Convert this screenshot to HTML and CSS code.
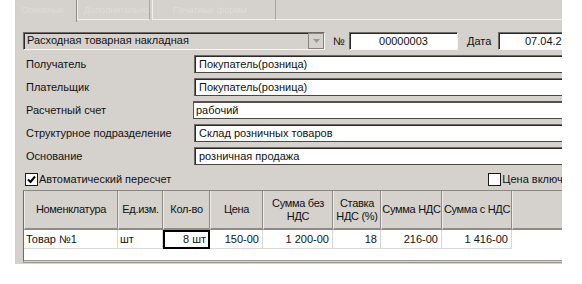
FILE: index.html
```html
<!DOCTYPE html>
<html lang="ru">
<head>
<meta charset="utf-8">
<link rel="stylesheet" href="styles.css">
</head>
<body>
<div class="panel">
  <div class="tabs">
    <div class="tab active">Основные</div>
    <div class="tab t2">Дополнительно</div>
    <div class="tab t3">Печатные формы</div>
    <div class="tab-rest"></div>
  </div>
  <div class="content">
    <div class="toprow">
      <div class="combo">
        <span class="combo-text">Расходная товарная накладная</span>
        <span class="combo-btn"><svg width="7" height="4" viewBox="0 0 7 4"><path d="M0 0h7L3.5 4z" fill="#9a9792"/></svg></span>
      </div>
      <span class="lbl-no">№</span>
      <div class="box numbox">00000003</div>
      <span class="lbl-date">Дата</span>
      <div class="box datebox">07.04.2010</div>
    </div>
    <div class="frow"><span class="flabel">Получатель</span><div class="field">Покупатель(розница)</div></div>
    <div class="frow"><span class="flabel">Плательщик</span><div class="field">Покупатель(розница)</div></div>
    <div class="frow"><span class="flabel">Расчетный счет</span><div class="field flat">рабочий</div></div>
    <div class="frow"><span class="flabel">Структурное подразделение</span><div class="field">Склад розничных товаров</div></div>
    <div class="frow"><span class="flabel">Основание</span><div class="field">розничная продажа</div></div>
    <div class="checks">
      <label class="chk"><span class="cb checked"><svg width="9" height="9" viewBox="0 0 9 9"><path d="M1 4.5l2.5 2.5L8 1.5" stroke="#000" stroke-width="2" fill="none"/></svg></span>Автоматический пересчет</label>
      <label class="chk chk2"><span class="cb"></span>Цена включ</label>
    </div>
    <div class="grid">
      <div class="hc">Номенклатура</div>
      <div class="hc">Ед.изм.</div>
      <div class="hc">Кол-во</div>
      <div class="hc">Цена</div>
      <div class="hc">Сумма без<br>НДС</div>
      <div class="hc">Ставка<br>НДС (%)</div>
      <div class="hc">Сумма НДС</div>
      <div class="hc">Сумма с НДС</div>
      <div class="hc empty"></div>
      <div class="dc left">Товар №1</div>
      <div class="dc left">шт</div>
      <div class="dc sel">8 шт</div>
      <div class="dc">150-00</div>
      <div class="dc">1 200-00</div>
      <div class="dc">18</div>
      <div class="dc">216-00</div>
      <div class="dc">1 416-00</div>
      <div class="dc blank"></div>
      <div class="gfill"></div>
    </div>
  </div>
</div>
</body>
</html>
```
FILE: styles.css
```css
* { box-sizing: border-box; }
html, body { margin: 0; padding: 0; background: #fff; }
body {
  font-family: "Liberation Sans", Arial, sans-serif;
  font-size: 11px;
  color: #111;
}
.panel {
  margin-left: 15px;
  width: 547px;
  height: 264px;
  background: #d5d1cc;
  overflow: hidden;
}
.tabs {
  display: flex;
  height: 22px;
}
.tab {
  flex-shrink: 0;
  color: #e0ddd9;
  font-size: 9px;
  line-height: 20px;
  padding-left: 6px;
  height: 22px;
  white-space: nowrap;
}
.tab.active { width: 62px; border-right: 1px solid #8d8a86; }
.tab.t2 { width: 73px; border-left: 1px solid #f2f0ec; border-bottom: 1px solid #f2f0ec; height: 20px; border-right: 1px solid #a8a5a0; }
.tab.t3 { width: 124px; border-left: 1px solid #f2f0ec; border-bottom: 1px solid #f2f0ec; height: 20px; border-right: 1px solid #a8a5a0; margin-left: 2px; padding-left: 20px; }
.tab-rest { flex: 1; border-bottom: 1px solid #f2f0ec; height: 20px; }
.content {
  padding: 10px 0 0 8px;
}
.toprow {
  display: flex;
  align-items: center;
  height: 18px;
}
.toprow > * { flex-shrink: 0; }
.combo {
  width: 302px;
  height: 18px;
  display: flex;
  border-top: 1px solid #6e6b67;
  border-left: 1px solid #6e6b67;
  border-right: 1px solid #f7f6f3;
  border-bottom: 1px solid #f7f6f3;
  box-shadow: inset 1px 1px 0 #2c2a28;
}
.combo-text {
  flex: 1;
  padding-left: 3px;
  line-height: 15px;
  white-space: nowrap;
}
.combo-btn {
  width: 16px;
  height: 16px;
  border: 1px solid #86837f;
  display: flex;
  align-items: center;
  justify-content: center;
}
.lbl-no { margin-left: 8px; width: 16px; }
.lbl-date { margin-left: 9px; width: 31px; }
.box {
  height: 18px;
  background: #fff;
  border-top: 1px solid #6e6b67;
  border-left: 1px solid #6e6b67;
  border-right: 1px solid #f7f6f3;
  border-bottom: 1px solid #f7f6f3;
  box-shadow: inset 1px 1px 0 #2c2a28;
  line-height: 16px;
  white-space: nowrap;
}
.numbox { width: 109px; text-align: center; }
.datebox { width: 90px; padding-left: 26px; }
.frow {
  display: flex;
  align-items: center;
  height: 18px;
  margin-top: 5px;
}
.frow > * { flex-shrink: 0; }
.flabel {
  width: 171px;
  padding-left: 3px;
  white-space: nowrap;
}
.field {
  width: 380px;
  height: 18px;
  background: #fff;
  border-top: 1px solid #6e6b67;
  border-left: 1px solid #6e6b67;
  border-bottom: 1px solid #4a4845;
  box-shadow: inset 1px 1px 0 #2c2a28;
  padding-left: 4px;
  line-height: 16px;
  white-space: nowrap;
}
.field.flat {
  margin-left: -1px;
  border-top: 2px solid #55524f;
  border-left: 1px solid #55524f;
  box-shadow: none;
  padding-left: 2px;
  line-height: 14px;
}
.checks {
  display: flex;
  height: 14px;
  margin-top: 7px;
  align-items: center;
}
.chk {
  display: flex;
  align-items: center;
  white-space: nowrap;
  margin-left: 2px;
  flex-shrink: 0;
}
.chk2 { margin-left: 317px; }
.cb {
  width: 13px;
  height: 13px;
  background: #fff;
  border: 1px solid #1a1a1a;
  margin-right: 1px;
  display: flex;
  align-items: center;
  justify-content: center;
}
.grid {
  margin-top: 4px;
  display: grid;
  grid-template-columns: 94px 45px 47px 53px 70px 48px 61px 70px 60px;
  grid-template-rows: 39px 19px 11px;
  border-top: 1px solid #8a8783;
  border-left: 1px solid #6e6b67;
  border-bottom: 3px double #9c9995;
  width: 560px;
}
.hc {
  display: flex;
  align-items: center;
  justify-content: center;
  text-align: center;
  line-height: 13px;
  letter-spacing: -0.3px;
  white-space: nowrap;
  border-right: 1px solid #8f8c88;
  border-left: 1px solid #eeece8;
  border-bottom: 2px solid #8f8c88;
}
.hc.empty { border-right: none; }
.dc {
  background: #fff;
  text-align: right;
  padding: 0 3px;
  line-height: 18px;
  border-right: 1px solid #d8d8d8;
  border-bottom: 1px solid #d8d8d8;
  white-space: nowrap;
}
.dc.left { text-align: left; padding-left: 2px; }
.dc.sel { border: 2px solid #000; line-height: 15px; padding-right: 2px; }
.dc.blank { background: #fff; border: none; }
.gfill { grid-column: 1 / -1; background: #fff; }
```
